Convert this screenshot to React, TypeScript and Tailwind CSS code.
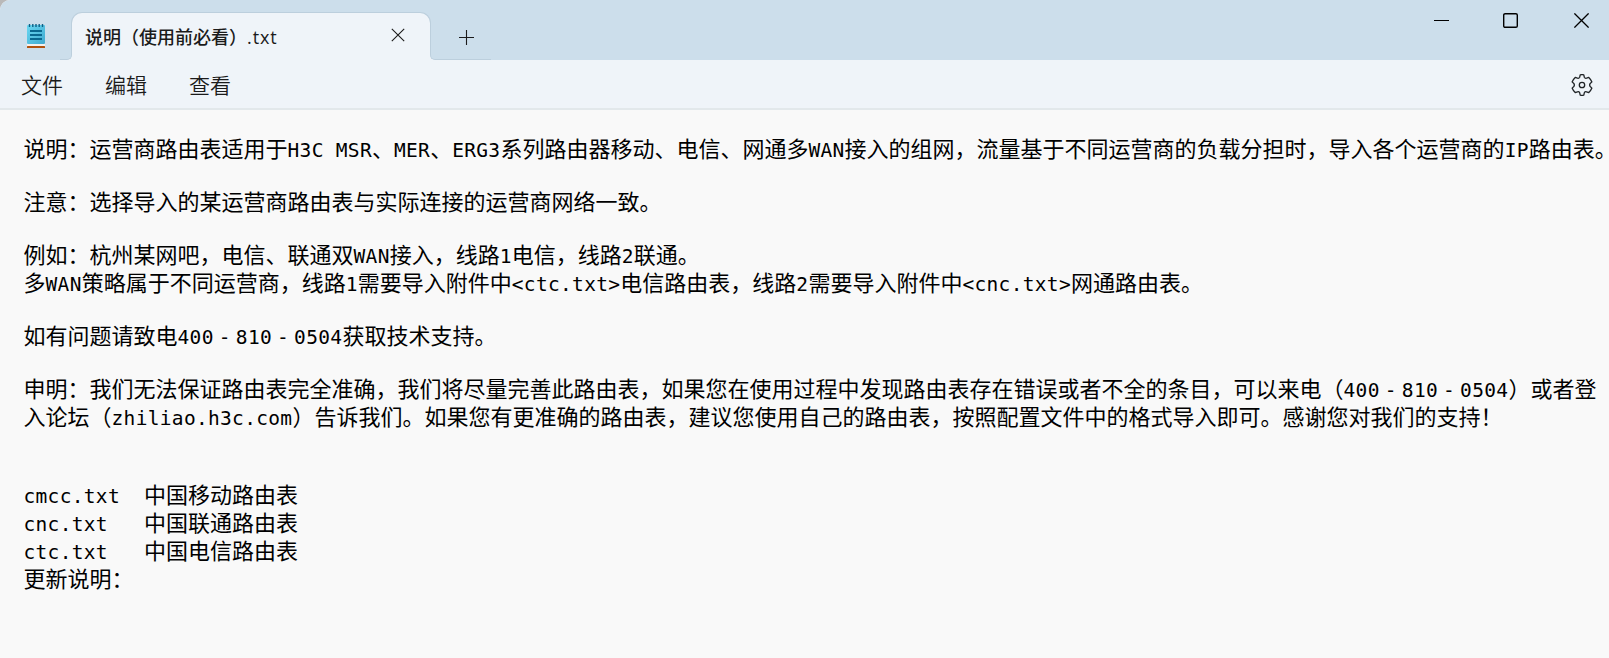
import { ReactNode } from "react";

const M = ({ children }: { children: ReactNode }) => (
  <span className="font-['DejaVu_Sans_Mono',monospace] text-[19.5px] tracking-[0.32px]">{children}</span>
);

// phone number, each dash sits in a full-width cell
const Phone = () => (
  <span className="font-['DejaVu_Sans_Mono',monospace] text-[19.5px] tracking-[0.34px] [word-spacing:-7.1px]">
    400 - 810 - 0504
  </span>
);

const lines: ReactNode[] = [
  <>说明：运营商路由表适用于<M>H3C MSR</M>、<M>MER</M>、<M>ERG3</M>系列路由器移动、电信、网通多<M>WAN</M>接入的组网，流量基于不同运营商的负载分担时，导入各个运营商的<M>IP</M>路由表。</>,
  null,
  <>注意：选择导入的某运营商路由表与实际连接的运营商网络一致。</>,
  null,
  <>例如：杭州某网吧，电信、联通双<M>WAN</M>接入，线路<M>1</M>电信，线路<M>2</M>联通。</>,
  <>多<M>WAN</M>策略属于不同运营商，线路<M>1</M>需要导入附件中<M>&lt;ctc.txt&gt;</M>电信路由表，线路<M>2</M>需要导入附件中<M>&lt;cnc.txt&gt;</M>网通路由表。</>,
  null,
  <>如有问题请致电<Phone />获取技术支持。</>,
  null,
  <>申明：我们无法保证路由表完全准确，我们将尽量完善此路由表，如果您在使用过程中发现路由表存在错误或者不全的条目，可以来电（<Phone />）或者登</>,
  <>入论坛（<M>zhiliao.h3c.com</M>）告诉我们。如果您有更准确的路由表，建议您使用自己的路由表，按照配置文件中的格式导入即可。感谢您对我们的支持！</>,
  null,
  null,
  <><M>{"cmcc.txt  "}</M>中国移动路由表</>,
  <><M>{"cnc.txt   "}</M>中国联通路由表</>,
  <><M>{"ctc.txt   "}</M>中国电信路由表</>,
  <>更新说明：</>,
];

function NotepadIcon() {
  return (
    <svg width="20" height="26" viewBox="0 0 20 26" className="ml-[26px] mt-[23px] shrink-0">
      <defs>
        <linearGradient id="pad" x1="0" y1="0" x2="1" y2="1">
          <stop offset="0" stopColor="#6bd8f2" />
          <stop offset="1" stopColor="#3fa9cf" />
        </linearGradient>
      </defs>
      <rect x="1" y="20" width="18" height="4" fill="#f4f1ee" />
      <rect x="1" y="23" width="18" height="2" rx="0.6" fill="#b1520f" />
      <rect x="1" y="2" width="18" height="19" rx="1" fill="url(#pad)" />
      <path d="M3.5 1v3M6.8 1v3M10 1v3M13.2 1v3M16.5 1v3" stroke="#0f5f84" strokeWidth="1.4" />
      <path d="M4 8h12M4 12h12M4 16h12" stroke="#0a6890" strokeWidth="1.8" />
    </svg>
  );
}

function SettingsIcon() {
  return (
    <svg width="22" height="22" viewBox="0 0 22 22" fill="none" stroke="#1f2326" strokeWidth="1.3" strokeLinejoin="round">
      <path d="M9.2 .8Q11 .4 12.8 .8L13.3 3.2Q14 4.6 15.5 4.2L17.8 3.4Q19.8 5.2 20.9 7.9L19.2 9.5Q18.1 11 19.2 12.5L20.9 14.1Q19.8 16.8 17.8 18.6L15.5 17.8Q14 17.4 13.3 18.8L12.8 21.2Q11 21.6 9.2 21.2L8.7 18.8Q8 17.4 6.5 17.8L4.2 18.6Q2.2 16.8 1.1 14.1L2.8 12.5Q3.9 11 2.8 9.5L1.1 7.9Q2.2 5.2 4.2 3.4L6.5 4.2Q8 4.6 8.7 3.2Z" />
      <circle cx="11" cy="11" r="2.7" />
    </svg>
  );
}

export default function App() {
  return (
    <div className="w-[1609px] h-[658px] overflow-hidden bg-[#b9b9b9] font-['Noto_Sans_CJK_SC',sans-serif]">
      <div className="flex h-full flex-col overflow-hidden rounded-tl-[10px] bg-[#f9f9f9]">
        {/* Title bar */}
        <div className="flex h-[60px] shrink-0 bg-[#ccdeeb]">
          <div className="flex w-[60px]">
            <NotepadIcon />
          </div>
          <div className="z-10 -mr-px h-[6px] w-[12px] self-end bg-[#eff4f9]">
            <div className="h-full rounded-br-[5px] border-r border-b border-[#bccfdd] bg-[#ccdeeb]" />
          </div>
          <div className="flex h-[48px] w-[360px] self-end rounded-t-[11px] border border-b-0 border-[#bccfdd] bg-[#eff4f9] text-[#1b1b1b]">
            <span className="ml-[13px] mt-[9px] whitespace-pre text-[18px] font-medium leading-[28px]">
              说明（使用前必看）<span className="font-['Open_Sans',sans-serif] tracking-[0.9px]">.txt</span>
            </span>
            <svg width="14" height="14" viewBox="0 0 14 14" className="ml-auto mr-[25px] mt-[15px]">
              <path d="M.8 .8l12.4 12.4M13.2 .8L.8 13.2" stroke="#1b1b1b" strokeWidth="1.1" />
            </svg>
          </div>
          <div className="z-10 -ml-px h-[6px] w-[61px] self-end bg-[#eff4f9]">
            <div className="h-full rounded-bl-[5px] border-b border-l border-[#bccfdd] bg-[#ccdeeb]" />
          </div>
          <svg width="15" height="15" viewBox="0 0 15 15" className="-ml-[32px] mt-[30px]">
            <path d="M7.5 0v15M0 7.5h15" stroke="#1b1b1b" strokeWidth="1.1" />
          </svg>
          <div className="ml-auto mr-[20px] mt-[13px] flex gap-[54px]">
            <svg width="15" height="15" viewBox="0 0 15 15">
              <path d="M0 7.5h15" stroke="#000" />
            </svg>
            <svg width="15" height="15" viewBox="0 0 15 15" fill="none">
              <rect x=".7" y=".7" width="13.6" height="13.6" rx="1.4" stroke="#000" strokeWidth="1.4" />
            </svg>
            <svg width="15" height="15" viewBox="0 0 15 15" className="ml-[2px]">
              <path d="M.4 .4l14.2 14.2M14.6 .4L.4 14.6" stroke="#000" strokeWidth="1.3" />
            </svg>
          </div>
        </div>

        {/* Menu bar */}
        <div className="flex h-[50px] shrink-0 items-center border-b-2 border-[#e2e8eb] bg-[#eff4f9] pl-[21px] pr-[16px] pt-px text-[21px] text-[#1b1b1b]">
          <div className="flex gap-[42px] font-[350]">
            <span>文件</span>
            <span>编辑</span>
            <span>查看</span>
          </div>
          <div className="ml-auto">
            <SettingsIcon />
          </div>
        </div>

        {/* Document */}
        <div className="flex-1 whitespace-pre pl-[23.5px] pt-[23px] text-[22px] text-black">
          {lines.map((line, i) => (
            <div key={i} className={line ? "h-[28px] leading-[28px]" : "h-[25.05px]"}>
              {line}
            </div>
          ))}
        </div>
      </div>
    </div>
  );
}
